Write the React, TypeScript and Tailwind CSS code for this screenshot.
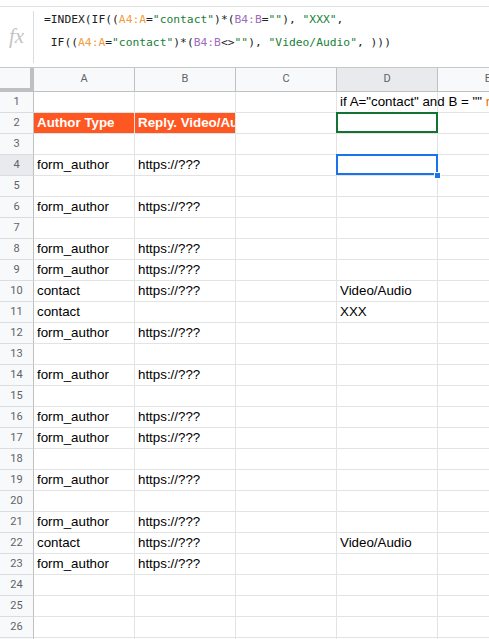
import React from "react";

const rows: [string, string, string][] = [
  ["", "", 'if A="contact" and B = ""'],
  ["Author Type", "Reply. Video/Audio", ""],
  ["", "", ""],
  ["form_author", "https://???", ""],
  ["", "", ""],
  ["form_author", "https://???", ""],
  ["", "", ""],
  ["form_author", "https://???", ""],
  ["form_author", "https://???", ""],
  ["contact", "https://???", "Video/Audio"],
  ["contact", "", "XXX"],
  ["form_author", "https://???", ""],
  ["", "", ""],
  ["form_author", "https://???", ""],
  ["", "", ""],
  ["form_author", "https://???", ""],
  ["form_author", "https://???", ""],
  ["", "", ""],
  ["form_author", "https://???", ""],
  ["", "", ""],
  ["form_author", "https://???", ""],
  ["contact", "https://???", "Video/Audio"],
  ["form_author", "https://???", ""],
  ["", "", ""],
  ["", "", ""],
  ["", "", ""],
  ["", "", ""],
];

const cols = ["A", "B", "C", "D", "E"];

function FormulaBar() {
  const o = "text-[#f29b3f]";
  const g = "text-[#188038]";
  const p = "text-[#9e6bc0]";
  return (
    <div className="h-[68px] border-b border-[#c7c7c7] bg-white pt-[6px]">
      <div className="flex h-[61px] border-t border-[#e0e0e0]">
        <div className="flex w-[33px] items-center justify-center">
          <span className="font-['Liberation_Serif',serif] text-[21px] italic text-[#c4c4c4]">fx</span>
        </div>
        <div className="my-[4px] w-px bg-[#dadce0]" />
        <div className="pl-[10px] pt-[1px] font-['DejaVu_Sans_Mono',monospace] text-[11.3px] leading-[23px] whitespace-pre text-[#202124]">
          <div>
            =INDEX(IF((<span className={o}>A4:A</span>=<span className={g}>"contact"</span>)*(<span className={p}>B4:B</span>=<span className={g}>""</span>), <span className={g}>"XXX"</span>,
          </div>
          <div>
            {" "}IF((<span className={o}>A4:A</span>=<span className={g}>"contact"</span>)*(<span className={p}>B4:B</span>&lt;&gt;<span className={g}>""</span>), <span className={g}>"Video/Audio"</span>, )))
          </div>
        </div>
      </div>
    </div>
  );
}

function HeaderRow() {
  return (
    <div className="grid h-[24px] grid-cols-[34px_101px_101px_101px_101px_101px]">
      <div className="border-r-[4px] border-b-[4px] border-[#c0c0c0] bg-[#f8f9fa]" />
      {cols.map((c) => (
        <div
          key={c}
          className={`flex items-center justify-center border-r border-b border-[#c0c0c0] font-['Roboto',sans-serif] text-[11px] text-[#5f6368] ${
            c === "D" ? "bg-[#e8eaed]" : "bg-[#f8f9fa]"
          }`}
        >
          {c}
        </div>
      ))}
    </div>
  );
}

function Cell({ text, className = "" }: { text: string; className?: string }) {
  return (
    <div
      className={`relative flex items-center whitespace-nowrap border-r border-b border-[#e2e3e3] px-[3px] font-['Liberation_Sans',Arial,sans-serif] text-[13.33px] text-black ${className}`}
    >
      {text}
    </div>
  );
}

export default function App() {
  return (
    <div className="h-screen w-full overflow-hidden bg-white">
      <FormulaBar />
      <HeaderRow />
      {rows.map(([a, b, d], i) => {
        const n = i + 1;
        const head = n === 2;
        return (
          <div key={n} className="grid h-[21px] grid-cols-[34px_101px_101px_101px_101px_101px]">
            <div
              className={`flex items-center justify-center border-r border-b border-r-[#c0c0c0] border-b-[#dadce0] font-['Roboto',sans-serif] text-[11px] text-[#5f6368] ${
                n === 4 ? "bg-[#e8eaed]" : "bg-[#f8f9fa]"
              }`}
            >
              {n}
            </div>
            <Cell
              text={a}
              className={head ? "overflow-hidden bg-[#ff5722] font-bold text-white" : ""}
            />
            <Cell
              text={b}
              className={head ? "overflow-hidden bg-[#ff5722] font-bold text-white" : "overflow-hidden"}
            />
            <Cell text="" />
            <div className="relative flex items-center whitespace-nowrap border-r border-b border-[#e2e3e3] px-[3px] font-['Liberation_Sans',Arial,sans-serif] text-[13.33px] text-black">
              {n === 1 ? (
                <span className="relative z-10">
                  {d} <span className="text-[#e8710a]">return "XXX"</span>
                </span>
              ) : (
                d
              )}
              {n === 2 && (
                <div className="absolute -top-px -left-px right-[-1px] bottom-0 z-20 border-2 border-[#137333]" />
              )}
              {n === 4 && (
                <>
                  <div className="absolute -top-px -left-px right-[-1px] bottom-0 z-20 border-2 border-[#1a73e8]" />
                  <div className="absolute right-[-4px] bottom-[-4px] z-30 h-[7px] w-[7px] border border-white bg-[#1a73e8]" />
                </>
              )}
            </div>
            <Cell text="" />
          </div>
        );
      })}
    </div>
  );
}
